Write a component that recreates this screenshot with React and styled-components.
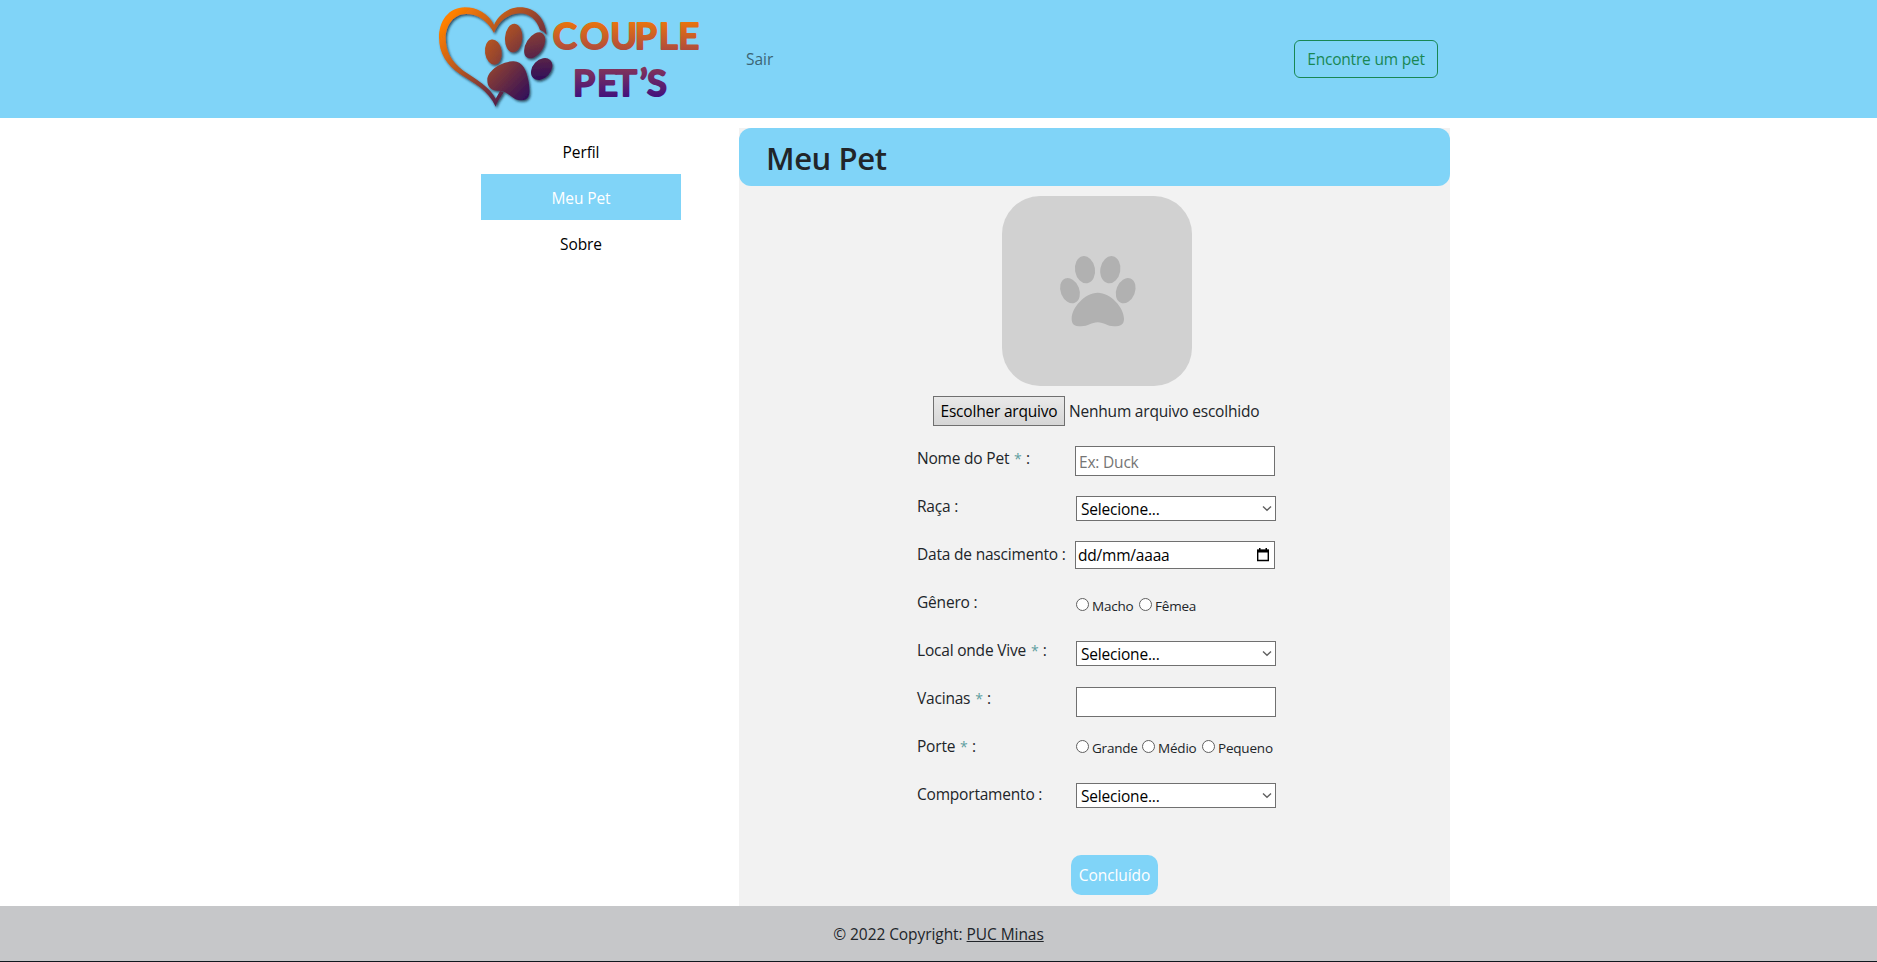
import React from 'react';
import styled, { createGlobalStyle } from 'styled-components';

const sky = '#80d4f8';

const GlobalStyle = createGlobalStyle`
  *, *::before, *::after { box-sizing: border-box; }
  body {
    margin: 0;
    background: #fff;
    color: #212529;
    font: 400 15.5px/24px 'Open Sans', 'Noto Sans', sans-serif;
    letter-spacing: -0.2px;
  }
  input, select, button { font: inherit; letter-spacing: inherit; }
`;

const Page = styled.div`
  height: 962px;
  display: flex;
  flex-direction: column;
  overflow: hidden;
`;

const Header = styled.header`
  height: 118px;
  flex: none;
  display: flex;
  align-items: center;
  padding: 0 439px 0 430px;
  background: ${sky};
`;

const LogoArt = styled.svg`
  width: 300px;
  height: 118px;
  display: block;
`;

const NavLink = styled.a`
  margin-left: 16px;
  color: #3c6474;
  letter-spacing: 0;
`;

const FindButton = styled.button`
  width: 144px;
  height: 38px;
  margin-left: auto;
  padding: 0;
  border: 1px solid #198754;
  border-radius: 6px;
  background: transparent;
  color: #198754;
  white-space: nowrap;
`;

const Main = styled.main`
  flex: 1;
  display: flex;
  padding: 10px 427px 0 481px;
`;

const Sidebar = styled.nav`
  width: 200px;
  margin-right: 58px;
`;

const SideItem = styled.a`
  height: 46px;
  display: flex;
  align-items: center;
  justify-content: center;
  padding-top: 2px;
  background: ${(p) => (p.$active ? sky : 'transparent')};
  color: ${(p) => (p.$active ? '#fff' : '#000')};
  letter-spacing: -0.1px;
`;

const Panel = styled.section`
  width: 711px;
  background: #f2f2f2;
`;

const PanelTitle = styled.h1`
  height: 58px;
  margin: 0;
  padding: 1px 27px 0;
  border-radius: 12px;
  background: ${sky};
  font-size: 31px;
  font-weight: 600;
  line-height: 58px;
  letter-spacing: -0.4px;
`;

const Photo = styled.div`
  width: 190px;
  height: 190px;
  margin: 10px 0 0 263px;
  border-radius: 38px;
  background: #d1d1d1;

  svg { display: block; }
`;

const FileRow = styled.div`
  height: 30px;
  display: flex;
  align-items: center;
  gap: 4px;
  margin: 10px 0 20px 194px;
  white-space: nowrap;
`;

const FileButton = styled.button`
  width: 132px;
  height: 30px;
  padding: 0;
  border: 1px solid #707070;
  background: linear-gradient(#e9e9e9, #d6d6d6);
  color: #000;
  white-space: nowrap;
`;

const Row = styled.div`
  height: 48px;
  display: grid;
  grid-template-columns: 158px 202px;
  align-items: start;
  margin-left: 178px;
`;

const Label = styled.label`
  white-space: nowrap;
`;

const Required = styled.span`
  margin: 0 1px;
  color: #5f9ea0;
  font-size: 14px;
`;

const TextInput = styled.input`
  width: 200px;
  height: 30px;
  margin: ${(p) => p.$top || 0}px 0 0 ${(p) => p.$left || 0}px;
  padding: 1px 3px 0;
  border: 1px solid #707070;
  border-radius: 0;
  background: #fff;
  color: #000;
  outline: 0;

  &::placeholder { color: #757575; opacity: 1; }
`;

const SelectBox = styled.div`
  width: 200px;
  height: 25px;
  display: flex;
  align-items: center;
  justify-content: space-between;
  margin: ${(p) => p.$top}px 0 0 1px;
  padding: 1px 3px 0 4px;
  border: 1px solid #707070;
  background: #fff;
  color: #000;
`;

const DateBox = styled(SelectBox)`
  height: 28px;
  margin: -1px 0 0;
  padding: 0 4px 0 2px;
`;

const Radios = styled.div`
  display: flex;
  align-items: center;
  height: 24px;
  margin: ${(p) => p.$top}px 0 0 1px;
  font-size: 13.5px;
  white-space: nowrap;
`;

const Radio = styled.label`
  width: ${(p) => p.$width}px;
  display: flex;
  align-items: center;
  gap: 3px;
`;

const Dot = styled.input`
  appearance: none;
  flex: none;
  width: 13px;
  height: 13px;
  margin: 0 0 3px;
  border: 1px solid #606060;
  border-radius: 50%;
  background: #fff;
`;

const Submit = styled.button`
  display: block;
  width: 87px;
  height: 40px;
  margin: 25px 0 0 332px;
  padding: 0;
  border: 0;
  border-radius: 10px;
  background: ${sky};
  color: #fff;
  letter-spacing: -0.1px;
`;

const Footer = styled.footer`
  height: 56px;
  flex: none;
  display: flex;
  align-items: center;
  justify-content: center;
  gap: 4px;
  padding-top: 1px;
  border-bottom: 1px solid #10181f;
  background: #c6c7c9;
  letter-spacing: -0.07px;

  a { color: #212529; text-decoration: underline; }
`;

function Logo() {
  return (
    <LogoArt viewBox="0 0 900 354" role="img" aria-label="Couple Pet's">
      <defs>
        <linearGradient id="mark" gradientUnits="userSpaceOnUse" x1="70" y1="40" x2="310" y2="270">
          <stop offset="0" stopColor="#ff8000" />
          <stop offset=".5" stopColor="#a04a2a" />
          <stop offset="1" stopColor="#341058" />
        </linearGradient>
        <linearGradient id="word" gradientUnits="userSpaceOnUse" x1="0" y1="66" x2="0" y2="290">
          <stop offset="0" stopColor="#e87410" />
          <stop offset=".37" stopColor="#b04c3c" />
          <stop offset=".64" stopColor="#7f325c" />
          <stop offset="1" stopColor="#43127c" />
        </linearGradient>
        <filter id="drop" x="-10%" y="-10%" width="120%" height="120%">
          <feDropShadow dx="4" dy="5" stdDeviation="3" floodColor="#102030" floodOpacity=".75" />
        </filter>
      </defs>
      <g fill="url(#mark)" filter="url(#drop)">
        <path d="M350 104C344 50 312 22 270 22C235 22 205 45 192 75C175 40 140 22 105 22C55 22 27 65 27 112C27 160 50 195 90 222C130 248 175 270 197 320C203 300 215 290 221 276L210 273L197 296C180 262 140 238 100 212C62 185 47 150 47 115C47 75 72 42 108 42C145 42 175 65 192 99C205 65 232 42 270 40C300 40 320 60 330 90Q341 92 350 104Z" />
        <ellipse cx="190" cy="156" rx="25" ry="38" transform="rotate(-8 190 156)" />
        <ellipse cx="251" cy="114" rx="26" ry="43" transform="rotate(4 251 114)" />
        <ellipse cx="314" cy="136" rx="26" ry="43" transform="rotate(32 314 136)" />
        <ellipse cx="335" cy="207" rx="27" ry="37" transform="rotate(43 335 207)" />
        <path d="M172 240C172 218 203 188 248 184C278 182 290 212 296 246C300 276 302 300 276 301C244 302 238 272 207 272C185 273 172 262 172 240Z" />
      </g>
      <g fill="url(#word)" stroke="url(#word)" strokeWidth="6.5" strokeLinejoin="round" fontFamily="Lato, sans-serif" fontWeight="600" fontSize="109">
        <text y="146" x="368 450 541 614 686 745">COUPLE</text>
        <text y="287" x="429 501 556 629 651">PET’S</text>
      </g>
    </LogoArt>
  );
}

function PawPlaceholder() {
  return (
    <svg width="190" height="190" viewBox="66 48 570 570" fill="#b1b1b1">
      <ellipse cx="315" cy="269" rx="30" ry="41" transform="rotate(-10 315 269)" />
      <ellipse cx="391" cy="269" rx="30" ry="41" transform="rotate(10 391 269)" />
      <ellipse cx="270" cy="332" rx="28" ry="39" transform="rotate(-22 270 332)" />
      <ellipse cx="437" cy="332" rx="28" ry="39" transform="rotate(22 437 332)" />
      <path d="M353 338C392 338 432 383 432 416C432 434 422 439 402 439C382 439 372 427 353 427C334 427 325 439 303 439C283 439 275 433 275 416C275 383 315 338 353 338Z" />
    </svg>
  );
}

function Select({ top }) {
  return (
    <SelectBox $top={top} role="combobox">
      Selecione...
      <svg width="10" height="8" viewBox="0 0 10 8" fill="none" stroke="#606060" strokeWidth="1.4">
        <path d="M1 1.5L5 5.2L9 1.5" />
      </svg>
    </SelectBox>
  );
}

function Field({ label, required, children }) {
  return (
    <Row>
      <Label>
        {label} {required && <Required>* </Required>}:
      </Label>
      {children}
    </Row>
  );
}

function RadioGroup({ name, top, options }) {
  return (
    <Radios $top={top}>
      {options.map(([text, width]) => (
        <Radio key={text} $width={width}>
          <Dot type="radio" name={name} />
          {text}
        </Radio>
      ))}
    </Radios>
  );
}

export default function App() {
  return (
    <Page>
      <GlobalStyle />
      <Header>
        <Logo />
        <NavLink>Sair</NavLink>
        <FindButton>Encontre um pet</FindButton>
      </Header>
      <Main>
        <Sidebar>
          <SideItem>Perfil</SideItem>
          <SideItem $active>Meu Pet</SideItem>
          <SideItem>Sobre</SideItem>
        </Sidebar>
        <Panel>
          <PanelTitle>Meu Pet</PanelTitle>
          <Photo>
            <PawPlaceholder />
          </Photo>
          <FileRow>
            <FileButton>Escolher arquivo</FileButton>
            <span>Nenhum arquivo escolhido</span>
          </FileRow>
          <Field label="Nome do Pet" required>
            <TextInput placeholder="Ex: Duck" />
          </Field>
          <Field label="Raça">
            <Select top={2} />
          </Field>
          <Field label="Data de nascimento">
            <DateBox>
              dd/mm/aaaa
              <svg width="14" height="16" viewBox="0 0 14 16">
                <path d="M1.7 3.5h10.6v10H1.7z" fill="none" stroke="#000" strokeWidth="1.4" />
                <path d="M1 2.5h12v3H1zM3 1h1.5v2H3zM9.5 1H11v2H9.5z" />
              </svg>
            </DateBox>
          </Field>
          <Field label="Gênero">
            <RadioGroup name="genero" top={4} options={[['Macho', 63], ['Fêmea', 60]]} />
          </Field>
          <Field label="Local onde Vive" required>
            <Select top={3} />
          </Field>
          <Field label="Vacinas" required>
            <TextInput $top={1} $left={1} />
          </Field>
          <Field label="Porte" required>
            <RadioGroup name="porte" top={2} options={[['Grande', 66], ['Médio', 60], ['Pequeno', 74]]} />
          </Field>
          <Field label="Comportamento">
            <Select top={1} />
          </Field>
          <Submit>Concluído</Submit>
        </Panel>
      </Main>
      <Footer>
        <span>© 2022 Copyright:</span>
        <a>PUC Minas</a>
      </Footer>
    </Page>
  );
}
